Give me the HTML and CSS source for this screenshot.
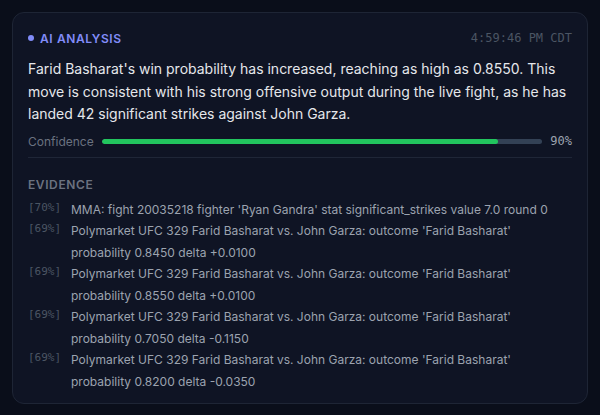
FILE: index.html
```html
<!DOCTYPE html>
<html lang="en">

<head>
  <meta charset="UTF-8" />
  <meta name="viewport" content="width=device-width, initial-scale=1.0" />
  <title>AI Analysis</title>
  <link rel="stylesheet" href="styles.css">
</head>

<body>
  <div class="card">
    <div class="card-head">
      <div class="label"><span class="dot"></span>AI ANALYSIS</div>
      <div class="time">4:59:46 PM CDT</div>
    </div>

    <p class="summary">Farid Basharat's win probability has increased, reaching as high as 0.8550. This move is consistent with his strong offensive output during the live fight, as he has landed 42 significant strikes against John Garza.</p>

    <div class="confidence">
      <span class="conf-label">Confidence</span>
      <div class="bar"><div class="fill" style="width:90%"></div></div>
      <span class="conf-value">90%</span>
    </div>

    <div class="evidence">
      <h3>EVIDENCE</h3>
      <ul class="evidence-list">
        <li><span class="score">[70%]</span><span class="text">MMA: fight 20035218 fighter 'Ryan Gandra' stat significant_strikes value 7.0 round 0</span></li>
        <li><span class="score">[69%]</span><span class="text">Polymarket UFC 329 Farid Basharat vs. John Garza: outcome 'Farid Basharat' probability 0.8450 delta +0.0100</span></li>
        <li><span class="score">[69%]</span><span class="text">Polymarket UFC 329 Farid Basharat vs. John Garza: outcome 'Farid Basharat' probability 0.8550 delta +0.0100</span></li>
        <li><span class="score">[69%]</span><span class="text">Polymarket UFC 329 Farid Basharat vs. John Garza: outcome 'Farid Basharat' probability 0.7050 delta -0.1150</span></li>
        <li><span class="score">[69%]</span><span class="text">Polymarket UFC 329 Farid Basharat vs. John Garza: outcome 'Farid Basharat' probability 0.8200 delta -0.0350</span></li>
      </ul>
    </div>
  </div>
</body>

</html>
```

FILE: styles.css
```css
body {
  margin: 0;
  padding: 12px;
  background: #0a0e1a;
  font-family: Inter, "Noto Sans", sans-serif;
  color: #e5e7eb;
}

.card {
  background: #0f1424;
  border: 1px solid #1e2535;
  border-radius: 12px;
  padding: 18px 15px 14px 15px;
  height: 392px;
  box-sizing: border-box;
}

.card-head {
  display: flex;
  justify-content: space-between;
  align-items: center;
  height: 14px;
}

.label {
  display: flex;
  align-items: center;
  gap: 6px;
  color: #818cf8;
  font-size: 12px;
  font-weight: 600;
  letter-spacing: 0.6px;
}

.dot {
  width: 6px;
  height: 6px;
  border-radius: 50%;
  background: #818cf8;
}

.time {
  font-family: "DejaVu Sans Mono", monospace;
  font-size: 12px;
  color: #4b5563;
}

.summary {
  margin: 13px 0 0;
  font-size: 14px;
  line-height: 22.5px;
  color: #e5e7eb;
}

.confidence {
  display: flex;
  align-items: center;
  gap: 8px;
  margin-top: 8px;
  padding-bottom: 8px;
  border-bottom: 1px solid #1f2637;
}

.conf-label {
  font-size: 12px;
  color: #6b7280;
  width: 66px;
}

.bar {
  flex: 1;
  height: 5px;
  background: #334155;
  border-radius: 3px;
  overflow: hidden;
}

.fill {
  height: 100%;
  background: #22c55e;
  border-radius: 3px;
}

.conf-value {
  font-family: "DejaVu Sans Mono", monospace;
  font-size: 12px;
  color: #9ca3af;
}

.evidence h3 {
  margin: 19px 0 7px;
  font-size: 12px;
  font-weight: 600;
  letter-spacing: 0.6px;
  color: #6b7280;
}

.evidence-list {
  list-style: none;
  margin: 0;
  padding: 0;
}

.evidence-list li {
  display: flex;
  gap: 8px;
  font-size: 12px;
  line-height: 21.5px;
}

.score {
  flex: none;
  width: 35px;
  font-family: "DejaVu Sans Mono", monospace;
  font-size: 11px;
  line-height: 18px;
  color: #4b5563;
}

.text {
  color: #9ca3af;
}
```
